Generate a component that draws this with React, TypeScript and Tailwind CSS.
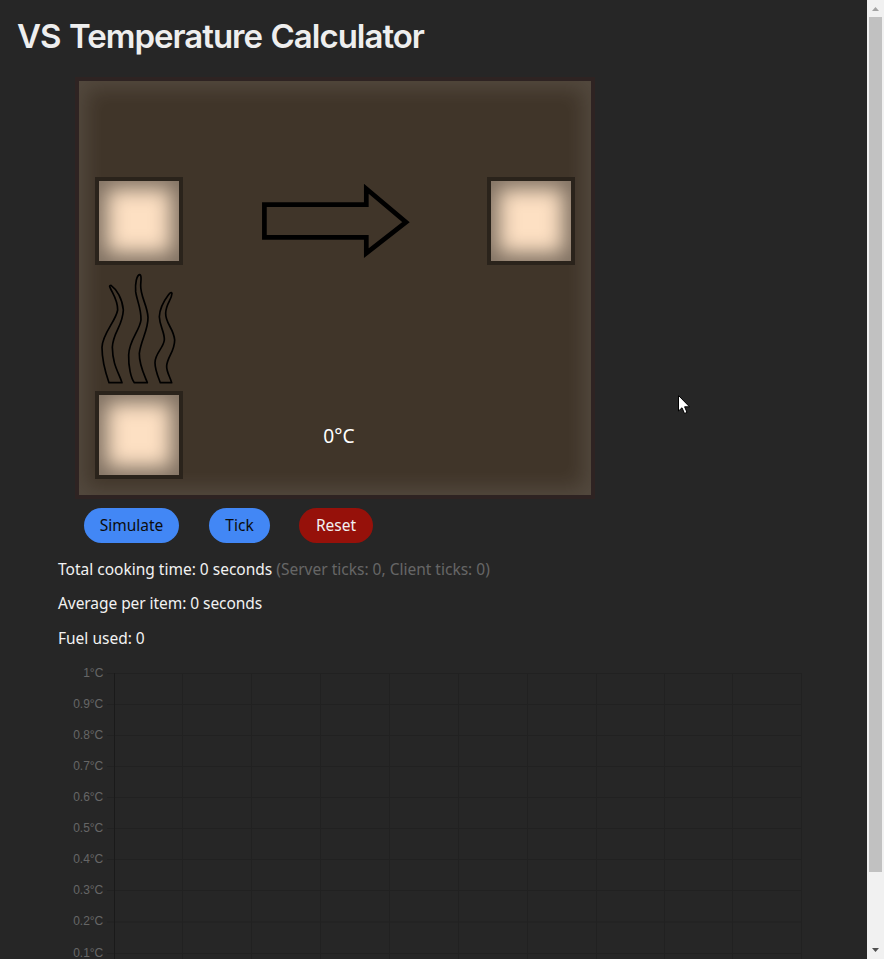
const LABELS: [string, number][] = [
  ['1°C', 673.5], ['0.9°C', 704.5], ['0.8°C', 735.5], ['0.7°C', 766.5], ['0.6°C', 797.5],
  ['0.5°C', 828.5], ['0.4°C', 859.5], ['0.3°C', 890.5], ['0.2°C', 922], ['0.1°C', 953.5],
];
const COLUMNS = [182.5, 251.5, 320.5, 389.5, 458.5, 527.5, 596.5, 664.5, 732.5, 801.5];

function Slot() {
  return (
    <div className="size-[88px] shrink-0 border-4 border-[#2a231b] bg-[#fde0c3] shadow-[inset_0_0_20px_8px_rgba(0,0,0,0.5)]" />
  );
}

function Flames() {
  return (
    <svg className="block h-[126px] w-[88px]" viewBox="30 15 264 378" fill="none" stroke="#000" strokeWidth="5" strokeLinejoin="round">
      <path d="M72 368L111 368C100 335 83 315 82 262C84 215 113 200 115 150C112 115 95 88 78 76C72 76 74 80 75 82C82 100 98 118 98 150C92 185 52 220 51 262C51 300 62 340 72 368Z" />
      <path d="M148 368L187 368C178 345 162 315 163 280C168 240 190 210 189 172C187 135 166 110 167 75C168 62 170 44 164 44C155 46 150 70 152 95C155 120 169 145 168 180C164 212 132 240 131 285C130 320 138 355 148 368Z" />
      <path d="M226 368L260 368C255 350 244 335 245 318C247 290 269 275 269 240C266 205 241 190 242 160C243 130 260 120 261 100C258 95 254 100 250 105C235 125 224 145 223 170C224 200 239 215 238 240C235 265 210 280 210 308C210 330 220 352 226 368Z" />
    </svg>
  );
}

function Arrow() {
  return (
    <svg className="mt-[3px] block h-20 w-[152px]" viewBox="260 180 152 80" fill="none" stroke="#000" strokeWidth="4.7">
      <path d="M264.4 204.6H366.3V188.8L406 222.2L366.3 253.2V237.4H264.4Z" />
    </svg>
  );
}

function Chart() {
  return (
    <svg className="block h-[299px] w-[809px]" viewBox="58 660 809 299">
      <g stroke="#212121" strokeWidth="1">
        {LABELS.map(([t, y]) => <path key={t} d={`M107 ${y}H802`} />)}
        {COLUMNS.map((x) => <path key={x} d={`M${x} 673V959`} />)}
      </g>
      <path d="M114.5 673V959" stroke="#1a1a1a" />
      <g fill="#666" fontFamily="'Liberation Sans', Arial, sans-serif" fontSize="12" textAnchor="end">
        {LABELS.map(([t, y]) => <text key={t} x="103.3" y={y + 3.4}>{t}</text>)}
      </g>
    </svg>
  );
}

function Scrollbar() {
  return (
    <div className="flex h-full w-[17px] shrink-0 flex-col items-center bg-[#f1f1f1]">
      <svg className="block h-[17px] w-[17px]" viewBox="0 0 17 17"><path d="M5 11L8.5 7L12 11Z" fill="#a3a3a3" /></svg>
      <div className="h-[855px] w-[13px] bg-[#c1c1c1]" />
      <svg className="mt-auto block h-[17px] w-[17px]" viewBox="0 0 17 17"><path d="M5 6L8.5 10L12 6Z" fill="#505050" /></svg>
    </div>
  );
}

export default function App() {
  return (
    <div className="relative flex h-[959px] w-[884px] overflow-hidden bg-[#262626] font-['Noto_Sans',sans-serif] text-[15.5px] text-[#f2f2f2]">
      <main className="flex min-w-0 flex-1 flex-col">
        <h1 className="h-[77px] pt-[15px] pl-[17px] font-['Inter',sans-serif] text-[33px] leading-[42px] font-semibold tracking-[-1px] text-[#eee] [word-spacing:1.2px]">
          VS Temperature Calculator
        </h1>
        <section className="ml-[75px] flex h-[422px] w-[520px] shrink-0 border-4 border-[#2e2322] bg-[#403529] px-4 pt-24 shadow-[inset_0_0_20px_8px_rgba(255,255,255,0.1)]">
          <div className="flex w-[88px] flex-col">
            <Slot />
            <Flames />
            <Slot />
          </div>
          <div className="flex flex-1 flex-col items-center pl-[2px]">
            <Arrow />
            <div className="mt-[162px] pl-[6px] text-[19.2px] leading-7 text-white">0°C</div>
          </div>
          <Slot />
        </section>
        <div className="mt-[9px] ml-[84px] flex h-[35px] leading-[35px]">
          <button className="w-[95px] rounded-full bg-[#4287f5] text-[#0c0c0c]">Simulate</button>
          <button className="ml-[30px] w-[61px] rounded-full bg-[#4287f5] text-[#0c0c0c]">Tick</button>
          <button className="ml-[29px] w-[74px] rounded-full bg-[#96110a] text-[#f2f2f2]">Reset</button>
        </div>
        <div className="mt-[16px] ml-[58px] h-[101px] leading-5">
          <p>Total cooking time: 0 seconds <span className="text-[#666]">(Server ticks: 0, Client ticks: 0)</span></p>
          <p className="mt-[14px] tracking-[-0.06px]">Average per item: 0 seconds</p>
          <p className="mt-[15px]">Fuel used: 0</p>
        </div>
        <div className="ml-[58px]"><Chart /></div>
      </main>
      <Scrollbar />
      <svg className="absolute top-[394px] left-[677px] h-[22px] w-[14px]" viewBox="0 0 14 22">
        <path d="M1.5 1.5V17L5 13.8L7.5 19.5L10 18.4L7.6 12.8H12.5Z" fill="#fff" stroke="#000" />
      </svg>
    </div>
  );
}
